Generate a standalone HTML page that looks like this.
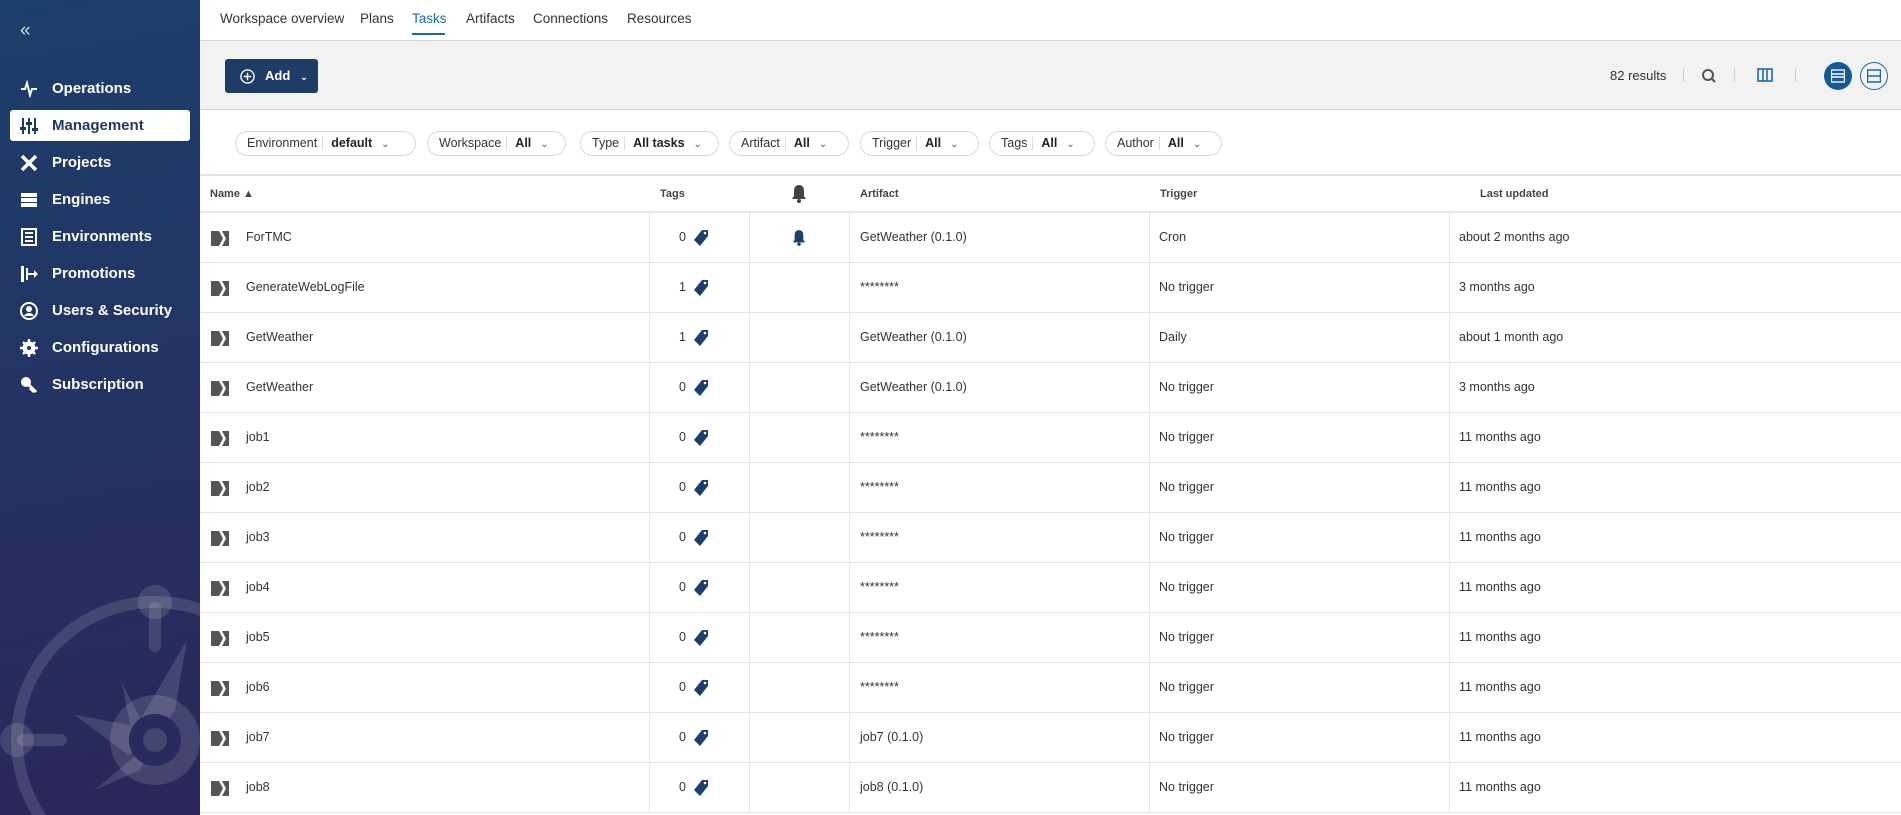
<!DOCTYPE html>
<html><head><meta charset="utf-8"><style>
*{box-sizing:border-box;margin:0;padding:0}
body{width:1901px;height:815px;overflow:hidden;font-family:"Liberation Sans",sans-serif;color:#333;background:#fff;position:relative}
#sb{position:absolute;left:0;top:0;width:200px;height:815px;background:linear-gradient(170deg,#1d3f6c 0%,#243262 55%,#2b2659 100%);overflow:hidden}
.nav{position:absolute;left:10px;width:180px;height:31px;color:#fff;font-weight:bold;font-size:15px;line-height:31px;padding-left:42px}
.nav.act{background:#fff;color:#1d3a5f;border-radius:3px}
.nav svg{position:absolute;left:10px;top:7px}
#top{position:absolute;left:200px;top:0;right:0;height:41px;border-bottom:1px solid #d6d6d6;background:#fff}
.tab{position:absolute;top:11px;font-size:13.5px;color:#333}
#tool{position:absolute;left:200px;top:41px;right:0;height:69px;background:#f2f2f2;border-bottom:1px solid #d4d4d4}
.pill{position:absolute;top:131px;height:25px;border:1px solid #d9d9d9;border-radius:13px;font-size:12.5px;line-height:23px;padding-left:11px;color:#333;white-space:nowrap}
.pill b{border-left:1px solid #ddd;padding-left:8px;margin-left:5px;color:#222}
.pill i{font-style:normal;font-size:10px;margin-left:9px;color:#555}
.hd{position:absolute;top:188px;font-size:11px;font-weight:bold;color:#444}
.row{position:absolute;left:200px;right:0;height:50px;border-bottom:1px solid #e3e3e3;font-size:12.5px}
.row span{position:absolute;top:17px}
.vl{position:absolute;top:0;bottom:0;width:1px;background:#e6e6e6}
</style></head><body>
<div id="sb">
<div style="position:absolute;left:20px;top:20px;color:#cfd8e6;font-size:19px">«</div>
<svg style="position:absolute;left:0;top:540px" width="200" height="275" viewBox="0 540 200 275"><g fill="none" stroke="rgba(255,255,255,0.13)" stroke-width="12"><circle cx="155" cy="740" r="138"/></g><g fill="rgba(255,255,255,0.13)"><circle cx="155" cy="602" r="17"/><circle cx="17" cy="740" r="17"/><rect x="149" y="602" width="12" height="50" rx="6"/><rect x="17" y="734" width="50" height="12" rx="6"/><polygon points="187,640 175,710 155,740 140,720"/><polygon points="75,715 130,725 155,740 128,755"/><polygon points="95,790 130,760 155,740 140,770"/><polygon points="122,683 140,718 155,740 130,725"/><circle cx="155" cy="740" r="45"/></g><circle cx="155" cy="740" r="26" fill="#2a2a5e"/><circle cx="155" cy="740" r="12" fill="rgba(255,255,255,0.13)"/></svg>
<div class="nav" style="top:73px"><svg width="18" height="18" viewBox="0 0 18 18"><path d="M1 9h4l2-6 3 12 2-6h5" fill="none" stroke="#fff" stroke-width="2"/></svg>Operations</div>
<div class="nav act" style="top:110px"><svg width="18" height="18" viewBox="0 0 18 18" fill="#1d3a5f"><rect x="2" y="1" width="2" height="16"/><rect x="8" y="1" width="2" height="16"/><rect x="14" y="1" width="2" height="16"/><rect x="0" y="10" width="6" height="3"/><rect x="6" y="5" width="6" height="3"/><rect x="12" y="11" width="6" height="3"/></svg>Management</div>
<div class="nav" style="top:147px"><svg width="18" height="18" viewBox="0 0 18 18"><path d="M2 2l14 14M16 2L2 16" stroke="#fff" stroke-width="3.5"/></svg>Projects</div>
<div class="nav" style="top:184px"><svg width="18" height="18" viewBox="0 0 18 18" fill="#fff"><rect x="1" y="2" width="16" height="4"/><rect x="1" y="7" width="16" height="4"/><rect x="1" y="12" width="16" height="4"/></svg>Engines</div>
<div class="nav" style="top:221px"><svg width="18" height="18" viewBox="0 0 18 18"><rect x="2" y="1" width="14" height="16" fill="none" stroke="#fff" stroke-width="2"/><path d="M5 5h8M5 9h8M5 13h8" stroke="#fff" stroke-width="2"/></svg>Environments</div>
<div class="nav" style="top:258px"><svg width="18" height="18" viewBox="0 0 18 18" fill="#fff"><rect x="1" y="1" width="3" height="16"/><rect x="6" y="3" width="2" height="12"/><path d="M8 8h6V5l4 4-4 4v-3H8z"/></svg>Promotions</div>
<div class="nav" style="top:295px"><svg width="18" height="18" viewBox="0 0 18 18"><circle cx="9" cy="9" r="8" fill="none" stroke="#fff" stroke-width="2"/><circle cx="9" cy="7" r="3" fill="#fff"/><path d="M4 14c2-4 8-4 10 0" fill="#fff"/></svg>Users &amp; Security</div>
<div class="nav" style="top:332px"><svg width="18" height="18" viewBox="0 0 18 18"><circle cx="9" cy="9" r="5" fill="none" stroke="#fff" stroke-width="3"/><path d="M9 0v18M0 9h18M3 3l12 12M15 3L3 15" stroke="#fff" stroke-width="2.5"/><circle cx="9" cy="9" r="2" fill="#243262"/></svg>Configurations</div>
<div class="nav" style="top:369px"><svg width="18" height="18" viewBox="0 0 18 18"><circle cx="6" cy="6" r="5" fill="#fff"/><path d="M8 8l8 8M12 12l-2 2M14 14l-2 2" stroke="#fff" stroke-width="3"/></svg>Subscription</div>
</div>
<div id="top">
<span class="tab" style="left:20px">Workspace overview</span>
<span class="tab" style="left:160px">Plans</span>
<span class="tab" style="left:212px;color:#1b6aa6">Tasks</span>
<div style="position:absolute;left:212px;top:33px;width:33px;height:2px;background:#1b6aa6"></div>
<span class="tab" style="left:266px">Artifacts</span>
<span class="tab" style="left:333px">Connections</span>
<span class="tab" style="left:427px">Resources</span>
</div>
<div id="tool">
<div style="position:absolute;left:25px;top:18px;width:93px;height:34px;background:#1d3d66;border-radius:3px;color:#fff;font-weight:bold;font-size:13px;line-height:34px;padding-left:40px">Add<span style="font-size:9px;margin-left:10px">&#8964;</span>
<svg style="position:absolute;left:15px;top:10px" width="15" height="15" viewBox="0 0 16 16"><circle cx="8" cy="8" r="7" fill="none" stroke="#fff" stroke-width="1.5"/><path d="M8 4v8M4 8h8" stroke="#fff" stroke-width="1.5"/></svg></div>
<span style="position:absolute;left:1410px;top:27px;font-size:13px;color:#333">82 results</span>
<div style="position:absolute;left:1483px;top:27px;width:1px;height:14px;background:#ccc"></div>
<svg style="position:absolute;left:1501px;top:27px" width="16" height="16" viewBox="0 0 16 16"><circle cx="7" cy="7" r="5" fill="none" stroke="#555" stroke-width="2"/><path d="M11 11l3 3" stroke="#555" stroke-width="2"/></svg>
<div style="position:absolute;left:1534px;top:27px;width:1px;height:14px;background:#ccc"></div>
<svg style="position:absolute;left:1557px;top:27px" width="16" height="14" viewBox="0 0 16 14"><rect x="1" y="1" width="14" height="12" fill="none" stroke="#1b6aa6" stroke-width="1.6"/><path d="M6 1v12M10 1v12" stroke="#1b6aa6" stroke-width="1.6"/></svg>
<div style="position:absolute;left:1595px;top:27px;width:1px;height:14px;background:#ccc"></div>
<div style="position:absolute;left:1624px;top:21px;width:28px;height:28px;border-radius:50%;background:#145a96"><svg style="position:absolute;left:7px;top:7px" width="14" height="14" viewBox="0 0 14 14"><rect x="0.5" y="1" width="13" height="12" fill="none" stroke="#fff" stroke-width="1.3"/><path d="M0 5h14M0 8h14" stroke="#fff" stroke-width="1.5"/></svg></div>
<div style="position:absolute;left:1660px;top:21px;width:28px;height:28px;border-radius:50%;border:1.5px solid #1b6aa6"><svg style="position:absolute;left:6px;top:6px" width="14" height="14" viewBox="0 0 14 14"><rect x="0.5" y="1" width="13" height="12" fill="none" stroke="#1b6aa6" stroke-width="1.5"/><path d="M0 7h14" stroke="#1b6aa6" stroke-width="1.5"/></svg></div>
</div>
<div class="pill" style="left:235px;width:181px">Environment<b>default</b><i>&#8964;</i></div>
<div class="pill" style="left:427px;width:139px">Workspace<b>All</b><i>&#8964;</i></div>
<div class="pill" style="left:580px;width:139px">Type<b>All tasks</b><i>&#8964;</i></div>
<div class="pill" style="left:729px;width:120px">Artifact<b>All</b><i>&#8964;</i></div>
<div class="pill" style="left:860px;width:119px">Trigger<b>All</b><i>&#8964;</i></div>
<div class="pill" style="left:989px;width:106px">Tags<b>All</b><i>&#8964;</i></div>
<div class="pill" style="left:1105px;width:117px">Author<b>All</b><i>&#8964;</i></div>
<div style="position:absolute;left:200px;right:0;top:174px;height:2px;background:#e4e4e4"></div>
<span class="hd" style="left:210px">Name &#9650;</span>
<span class="hd" style="left:660px">Tags</span>
<svg style="position:absolute;left:791px;top:184px" width="16" height="19" viewBox="0 0 16 19"><path d="M8 1c-3 0-5 2-5 6v5l-2 3h14l-2-3V7c0-4-2-6-5-6z" fill="#444"/><circle cx="8" cy="17" r="2" fill="#444"/></svg>
<span class="hd" style="left:860px">Artifact</span>
<span class="hd" style="left:1160px">Trigger</span>
<span class="hd" style="left:1480px">Last updated</span>
<div style="position:absolute;left:200px;right:0;top:211px;height:2px;background:#e8e8e8"></div>
<div id="rows"></div>
<script>
var d=[["ForTMC",0,"GetWeather (0.1.0)","Cron","about 2 months ago",1],["GenerateWebLogFile",1,"********","No trigger","3 months ago"],["GetWeather",1,"GetWeather (0.1.0)","Daily","about 1 month ago"],["GetWeather",0,"GetWeather (0.1.0)","No trigger","3 months ago"]];
for(var i=1;i<=8;i++)d.push(["job"+i,0,i>6?"job"+i+" (0.1.0)":"********","No trigger","11 months ago"]);
var h="";d.forEach(function(r,k){var t=213+k*50;
h+='<div class="row" style="top:'+t+'px"><div class="vl" style="left:449px"></div><div class="vl" style="left:549px"></div><div class="vl" style="left:649px"></div><div class="vl" style="left:949px"></div><div class="vl" style="left:1249px"></div>'+
'<svg style="position:absolute;left:11px;top:18px" width="18" height="15" viewBox="0 0 18 15"><path d="M0 0h8l4 7.5-4 7.5H0z" fill="#555"/><path d="M11 0h7v15h-7l4-7.5z" fill="#555"/></svg>'+
'<span style="left:46px">'+r[0]+'</span><span style="left:479px">'+r[1]+'</span>'+
'<svg style="position:absolute;left:493px;top:16px" width="16" height="18" viewBox="0 0 16 18"><path d="M9 1h6v6L7 17 1 11z" fill="#1d3f6c"/><circle cx="12" cy="4" r="1.3" fill="#fff"/></svg>'+
(r[5]?'<svg style="position:absolute;left:592px;top:16px" width="14" height="17" viewBox="0 0 16 19"><path d="M8 1c-3 0-5 2-5 6v5l-2 3h14l-2-3V7c0-4-2-6-5-6z" fill="#1d3f6c"/><circle cx="8" cy="17" r="2" fill="#1d3f6c"/></svg>':'')+
'<span style="left:660px">'+r[2]+'</span><span style="left:959px">'+r[3]+'</span><span style="left:1259px">'+r[4]+'</span></div>';});
document.getElementById("rows").innerHTML=h;
</script>
</body></html>
